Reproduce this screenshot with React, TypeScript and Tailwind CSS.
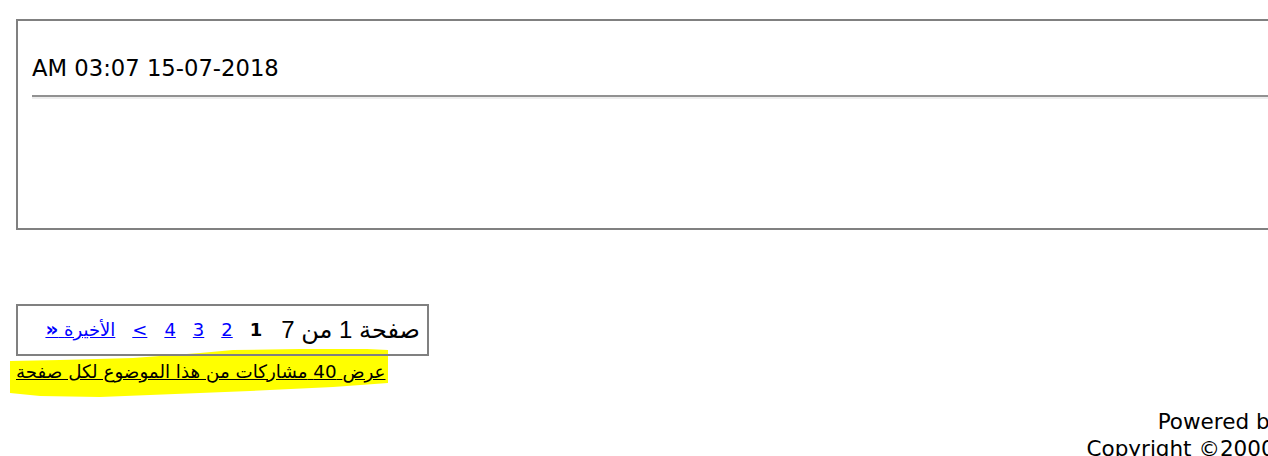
import React from "react";

const dv = { fontFamily: "'DejaVu Sans', sans-serif" };

function Pagination() {
  return (
    <div
      dir="rtl"
      className="relative z-10 flex h-[52px] w-[413px] items-center gap-[17px] border-2 border-[#808080] pr-[7px] pb-[1px]"
    >
      <span
        className="ml-[2px] text-[24px] leading-[28px] text-black"
        style={{ fontFamily: "'Liberation Sans', 'DejaVu Sans', sans-serif" }}
      >
        صفحة 1 من 7
      </span>
      <strong className="text-[18px] leading-[22px] font-bold text-black">1</strong>
      <a href="#" className="text-[18px] leading-[22px] text-[#0000ff] underline">2</a>
      <a href="#" className="text-[18px] leading-[22px] text-[#0000ff] underline">3</a>
      <a href="#" className="text-[18px] leading-[22px] text-[#0000ff] underline">4</a>
      <a href="#" dir="ltr" className="text-[18px] leading-[22px] text-[#0000ff] underline">
        {"<"}
      </a>
      <a href="#" dir="ltr" className="text-[18px] leading-[22px] text-[#0000ff] underline">
        <strong className="text-[20px] font-bold">»</strong> الأخيرة
      </a>
    </div>
  );
}

export default function App() {
  return (
    <div className="relative h-[456px] w-[1268px] overflow-hidden bg-white text-black" style={dv}>
      <div className="pl-4 pt-[19px]">
        <div className="h-[211px] w-[1320px] border-2 border-[#808080] pl-[14px] pt-[34px]">
          <div dir="ltr" className="text-[22.7px] leading-[26px]">AM 03:07 15-07-2018</div>
          <div className="mt-[14px] h-[4px] border-t-2 border-b-2 border-t-[#919191] border-b-[#ededed]" />
        </div>

        <div className="relative mt-[74px] w-fit">
          <svg
            className="absolute left-[-6px] top-[45px] z-0"
            width="380"
            height="50"
            viewBox="0 0 380 50"
          >
            <path
              d="M0 12 L50 11 L123 9 L190 4 L223 1 L290 0 L357 0 L378 1 L378 34 L323 38 L240 42 L190 44 L90 48 L30 47 L0 44 Z"
              fill="#ffff00"
            />
          </svg>
          <Pagination />
          <div
            dir="rtl"
            className="relative z-10 mt-[5px] w-fit text-[18.3px] leading-[22px] text-black underline"
          >
            عرض<span className="decoration-[#0000ff]"> 40 </span>مشاركات من هذا الموضوع لكل صفحة
          </div>
        </div>

        <div className="ml-[1039px] mt-[25px] w-[600px] text-center text-[21.5px] leading-[27px]">
          <div>Powered by vBulletin® Version 3.8.7</div>
          <div>Copyright ©2000 - 2018, vBulletin Solutions, Inc.{"\u00a0"}</div>
        </div>
      </div>
    </div>
  );
}
